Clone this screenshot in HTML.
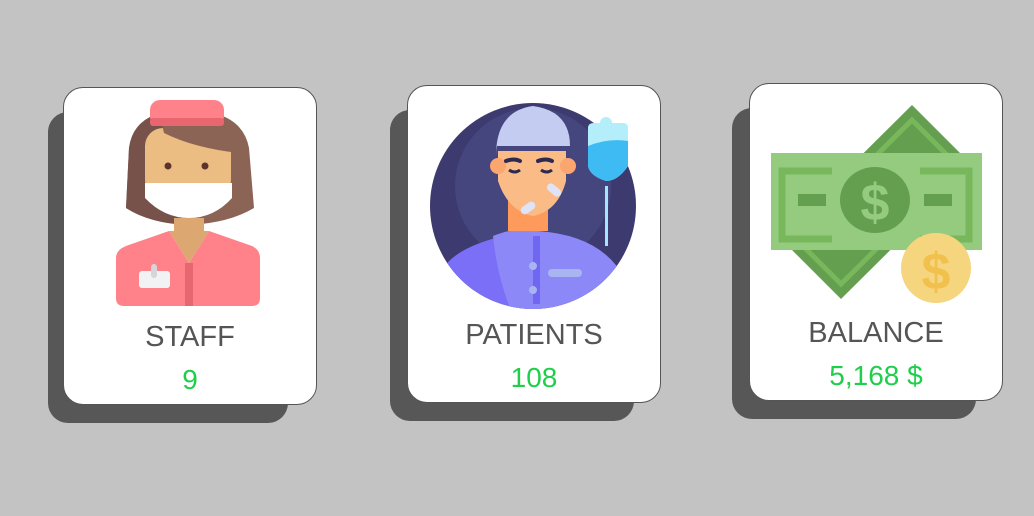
<!DOCTYPE html>
<html><head><style>
body{margin:0;width:1034px;height:516px;background:#c3c3c3;position:relative;overflow:hidden;font-family:"Liberation Sans","DejaVu Sans",sans-serif}
.sh{position:absolute;background:#575757;border-radius:20px}
.card{position:absolute;width:254px;height:318px;background:#fff;border:1px solid #555;border-radius:20px;box-sizing:border-box}
.t{position:absolute;left:0;width:100%;text-align:center;color:#555;font-size:29px;top:233px}
.n{position:absolute;left:0;width:100%;text-align:center;color:#1fcf4b;font-size:28px;top:276px}
svg{position:absolute}
</style></head><body>
<div class="sh" style="left:48px;top:112px;width:240px;height:311px"></div>
<div class="sh" style="left:390px;top:110px;width:244px;height:311px"></div>
<div class="sh" style="left:732px;top:108px;width:244px;height:311px"></div>

<div class="card" style="left:63px;top:87px">
<svg width="254" height="318" viewBox="0 0 254 318">
<path d="M65 60 Q70 22 122 22 Q178 22 185 60 L190 120 Q165 135 125 137 Q85 135 62 120 Z" fill="#8c6456"/>
<path d="M65 60 Q70 22 122 22 L122 137 Q85 135 62 120 Z" fill="#77524b"/>
<rect x="81" y="40" width="86" height="70" rx="18" fill="#ebbd82"/>
<path d="M96 28 Q140 30 175 50 L175 65 Q130 60 100 45 Z" fill="#8c6456"/>
<path d="M81 95 L168 95 L168 110 Q150 130 125 130 Q100 130 81 110 Z" fill="#fff"/>
<circle cx="104" cy="78" r="3.5" fill="#5b3430"/><circle cx="141" cy="78" r="3.5" fill="#5b3430"/>
<rect x="110" y="130" width="30" height="20" fill="#dca771"/>
<path d="M52 170 Q52 162 62 158 L105 143 L125 175 L145 143 L188 158 Q196 162 196 170 L196 210 Q196 218 188 218 L60 218 Q52 218 52 210 Z" fill="#ff8189"/>
<path d="M105 143 L125 175 L145 143 Z" fill="#dca771"/>
<rect x="121" y="175" width="8" height="43" fill="#e8666f"/>
<rect x="75" y="183" width="31" height="17" rx="3" fill="#f2f2f4"/>
<rect x="87" y="176" width="6" height="14" rx="3" fill="#d6d6da"/>
<rect x="86" y="12" width="74" height="26" rx="10" fill="#ff8189"/>
<rect x="86" y="30" width="74" height="8" rx="3" fill="#e8666f"/>
</svg>
<div class="t">STAFF</div><div class="n">9</div></div>

<div class="card" style="left:407px;top:85px">
<svg width="254" height="318" viewBox="0 0 254 318">
<defs><clipPath id="c"><circle cx="125" cy="120" r="103"/></clipPath></defs>
<circle cx="125" cy="120" r="103" fill="#3c3a6e"/>
<circle cx="125" cy="100" r="78" fill="#46467e"/>
<g clip-path="url(#c)">
<path d="M30 200 Q30 160 120 145 Q210 160 220 200 L220 240 L30 240 Z" fill="#7b6ef7"/>
<path d="M85 150 Q110 140 130 145 Q200 150 220 200 L220 240 L110 240 Q90 200 85 150Z" fill="#8c88f7"/>
</g>
<rect x="100" y="110" width="40" height="35" fill="#fe9a5c"/>
<path d="M90 65 L158 65 L158 95 Q150 125 125 130 Q100 125 90 95 Z" fill="#fbbb87"/>
<circle cx="90" cy="80" r="8" fill="#fba56f"/><circle cx="160" cy="80" r="8" fill="#fba56f"/>
<path d="M88 70 Q88 25 125 20 Q162 25 162 60 L88 60" fill="#c4ccf2"/>
<path d="M98 75 q8 -3 14 0 M130 75 q8 -3 14 0" stroke="#2d2a50" stroke-width="4" fill="none" stroke-linecap="round"/>
<path d="M101 84 q6 4 11 0 M133 84 q6 4 11 0" stroke="#2d2a50" stroke-width="3" fill="none"/>
<rect x="138" y="100" width="16" height="8" rx="4" transform="rotate(40 146 104)" fill="#dfe3f7"/>
<rect x="112" y="118" width="16" height="8" rx="4" transform="rotate(-35 120 122)" fill="#dfe3f7"/>
<rect x="125" y="150" width="7" height="68" fill="#7166f2"/>
<circle cx="125" cy="180" r="4" fill="#a8b5f0"/><circle cx="125" cy="204" r="4" fill="#a8b5f0"/>
<rect x="140" y="183" width="34" height="8" rx="4" fill="#a8b5f0"/>
<rect x="197" y="100" width="3" height="60" fill="#a6e4fb"/>
<path d="M180 42 Q180 37 186 37 L215 37 Q220 37 220 42 L220 80 Q210 95 198 95 Q182 90 180 80 Z" fill="#b4eefb"/>
<path d="M180 60 Q200 52 220 55 L220 80 Q210 95 198 95 Q182 90 180 80 Z" fill="#3dbbf2"/>
<circle cx="198" cy="37" r="6" fill="#b4eefb"/>
</svg>
<div class="t">PATIENTS</div><div class="n">108</div></div>

<div class="card" style="left:749px;top:83px">
<svg width="254" height="318" viewBox="0 0 254 318">
<path d="M162 21 L224 83 L91 215 L29 153 Z" fill="#649f4f"/>
<path d="M162 36 L209 83 L91 200 L44 153 Z" fill="none" stroke="#78b75b" stroke-width="5"/>
<rect x="21" y="69" width="211" height="97" fill="#95cb7e"/>
<path d="M82 87 L32 87 L32 155 L82 155 M170 87 L219 87 L219 155 L170 155" fill="none" stroke="#78b75b" stroke-width="7"/>
<rect x="48" y="110" width="28" height="12" fill="#649f4f"/><rect x="174" y="110" width="28" height="12" fill="#649f4f"/>
<ellipse cx="125" cy="116" rx="35" ry="33" fill="#649f4f"/>
<text x="125" y="136" font-size="52" font-weight="bold" text-anchor="middle" fill="#95cb7e" font-family="Liberation Sans">$</text>
<circle cx="186" cy="184" r="35" fill="#f6d57f"/>
<text x="186" y="205" font-size="52" font-weight="bold" text-anchor="middle" fill="#f2c14d" font-family="Liberation Sans">$</text>
</svg>
<div class="t">BALANCE</div><div class="n">5,168 $</div></div>
</body></html>
